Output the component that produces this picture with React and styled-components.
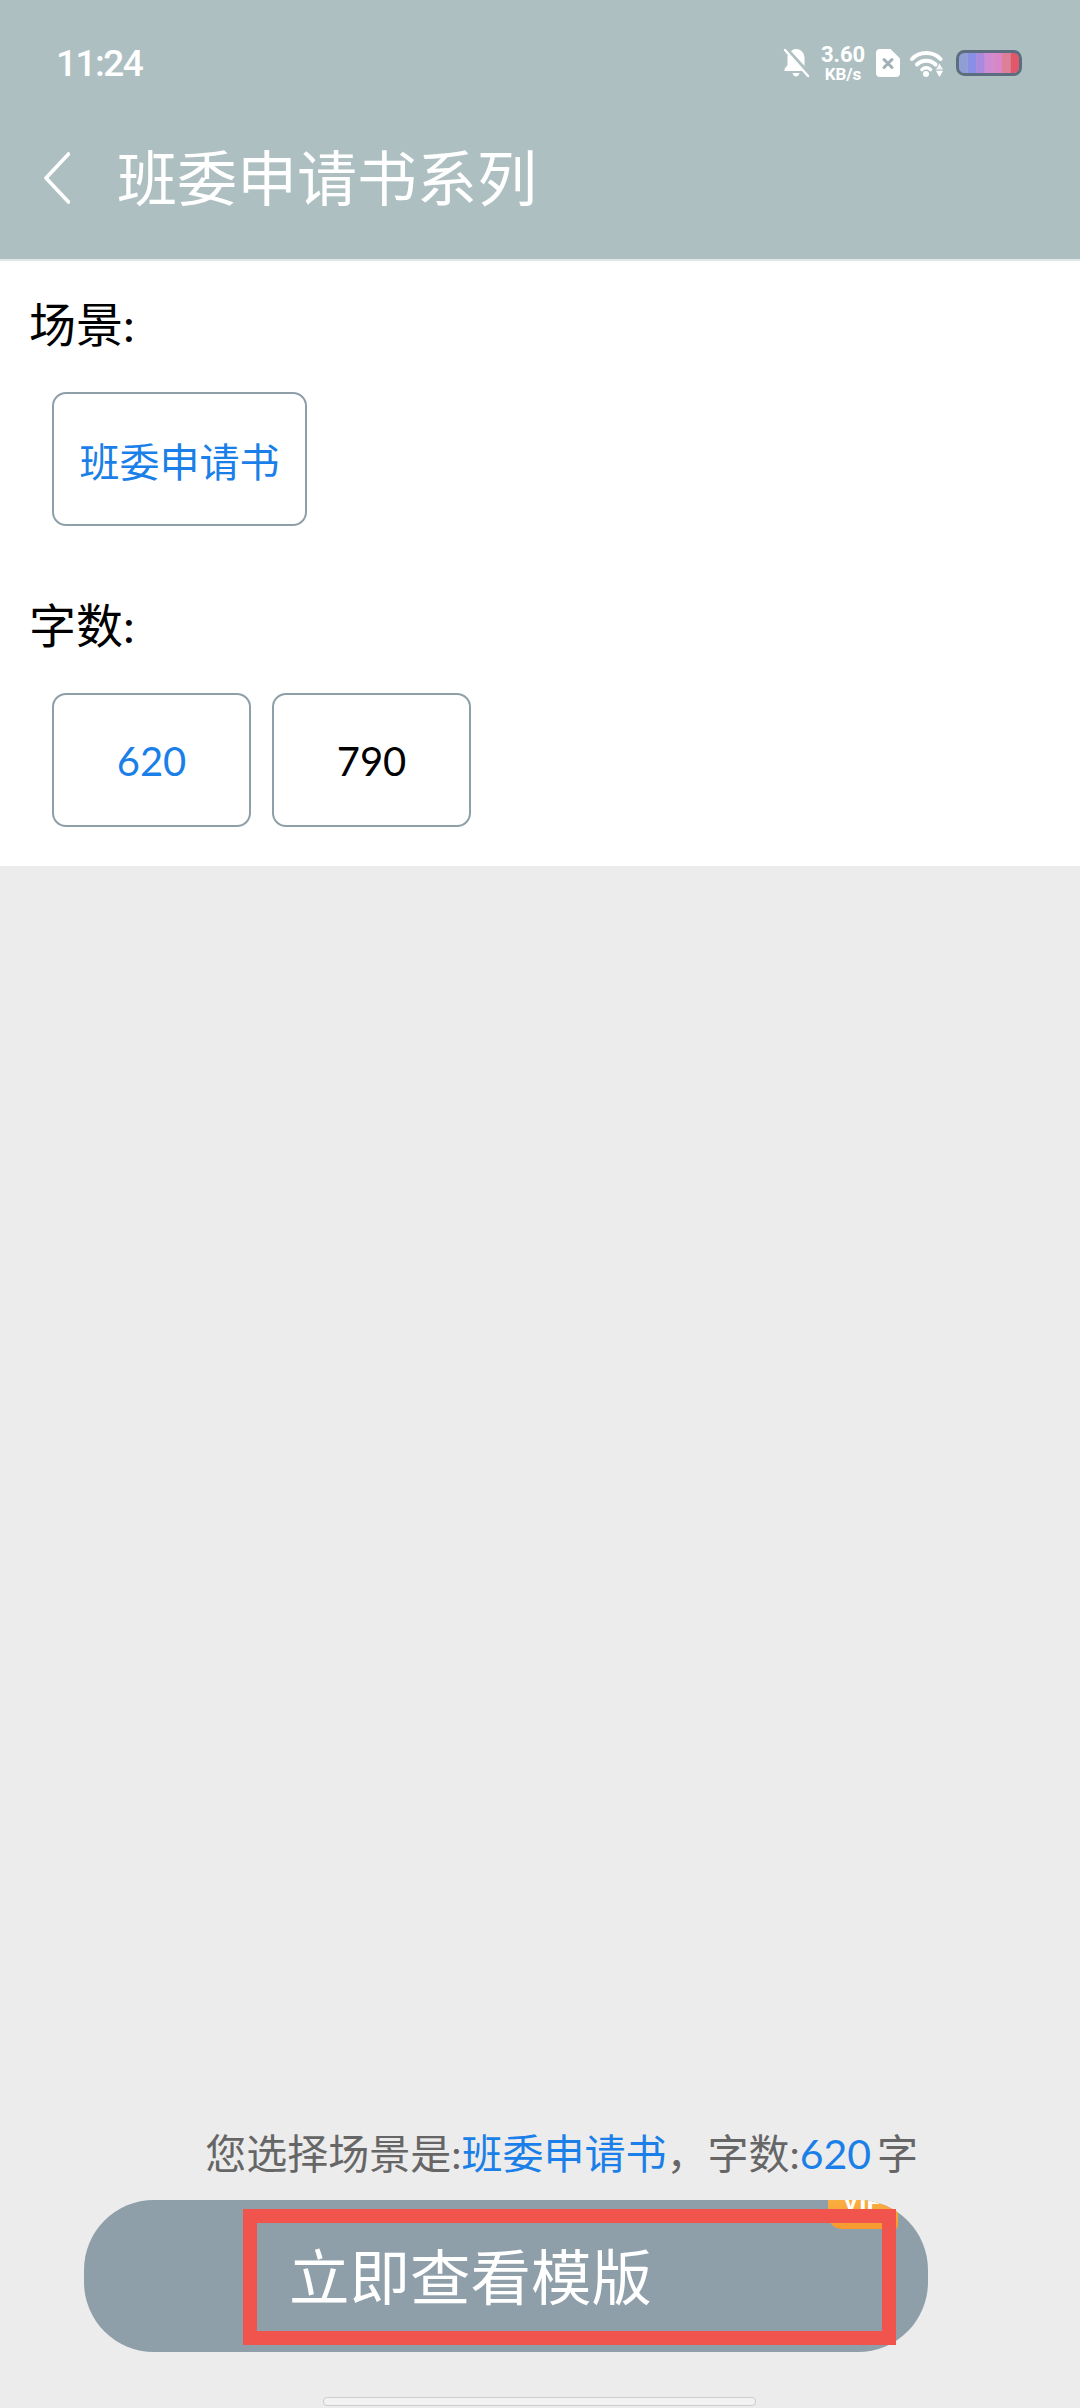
import React from "react";
import styled, { createGlobalStyle } from "styled-components";

const CJK = `Lato, "Noto Sans CJK SC", sans-serif`;

const Global = createGlobalStyle`
  html, body { margin: 0; padding: 0; background: #ececec; }
  * { box-sizing: border-box; }
`;

const Page = styled.div`
  width: 1080px;
  height: 2408px;
  display: flex;
  flex-direction: column;
  background: #ececec;
  font-family: ${CJK};
  overflow: hidden;
`;

const Header = styled.header`
  height: 261px;
  flex: none;
  background: #aebfc2;
  border-bottom: 2px solid #e0e7e9;
  display: flex;
  flex-direction: column;
  color: #fff;
`;

const StatusBar = styled.div`
  height: 126px;
  padding: 0 58px 0 56px;
  display: flex;
  align-items: center;
  justify-content: space-between;
`;

const Clock = styled.span`
  font-family: Roboto, sans-serif;
  font-size: 37px;
  font-weight: 500;
  letter-spacing: -1.5px;
`;

const StatusIcons = styled.div`
  display: flex;
  align-items: center;
`;

const IconSlot = styled.span`
  display: flex;
  margin-left: ${p => p.$left || 0}px;
`;

const Speed = styled.div`
  width: 46px;
  margin-left: 10px;
  display: flex;
  flex-direction: column;
  align-items: center;
  font-family: Roboto, sans-serif;
  font-weight: 700;
  line-height: 1;
`;

const SpeedValue = styled.span`
  font-size: 22px;
`;

const SpeedUnit = styled.span`
  font-size: 17px;
`;

const TitleRow = styled.div`
  display: flex;
  align-items: center;
  height: 108px;
  padding: 0 0 5px 44px;
`;

const Title = styled.h1`
  margin: 0 0 0 47px;
  font-size: 60px;
  font-weight: 400;
  line-height: 1;
`;

const Options = styled.section`
  flex: none;
  height: 605px;
  background: #fff;
  padding: 33px 30px 0 29px;
`;

const OptionLabel = styled.div`
  font-size: 47px;
  line-height: 60px;
  color: #000;
`;

const OptionRow = styled.div`
  display: flex;
  gap: 21px;
  margin: 38px 0 69px 23px;
`;

const Chip = styled.button`
  width: ${p => p.$width}px;
  height: 134px;
  padding: 2px 0 0;
  background: #fff;
  border: 2px solid #8e9fa9;
  border-radius: 14px;
  font-family: ${CJK};
  font-size: 40px;
  color: ${p => (p.$active ? "#1a7fe8" : "#000")};
`;

const Spacer = styled.div`
  flex: 1;
`;

const Summary = styled.p`
  margin: 0 162px 0 0;
  align-self: flex-end;
  font-size: 41px;
  line-height: 56px;
  color: #666;
  white-space: pre;
`;

const Accent = styled.span`
  color: #1a7fe8;
`;

const Unit = styled.span`
  margin-left: 6px;
`;

const ActionWrap = styled.div`
  position: relative;
  width: 844px;
  height: 152px;
  margin: 18px 0 0 84px;
  flex: none;
`;

const ActionButton = styled.button`
  position: relative;
  width: 100%;
  height: 100%;
  padding: 0;
  border: none;
  border-radius: 70px;
  background: #8e9fa9;
  overflow: hidden;
`;

const VipBadge = styled.span`
  position: absolute;
  top: -14px;
  right: 30px;
  width: 70px;
  height: 43px;
  background: linear-gradient(180deg, #fbb84a, #f79a2e);
  border-bottom-left-radius: 14px;
  border-bottom-right-radius: 4px;
  color: #fff;
  font-family: "Liberation Sans", sans-serif;
  font-weight: 700;
  font-size: 26px;
  line-height: 30px;
  text-align: center;
`;

const ActionFrame = styled.div`
  position: absolute;
  left: 159px;
  top: 9px;
  width: 653px;
  height: 136px;
  border: 14px solid #f0544c;
  display: flex;
  align-items: center;
  padding: 0 0 7px 32px;
  color: #fff;
  font-size: 60.500px;
`;

const HomeBar = styled.div`
  flex: none;
  width: 433px;
  height: 9px;
  margin: 45px 0 2px 323px;
  background: #f2f2f2;
  border: 1px solid #cdcdcd;
  border-radius: 4px;
`;

/* Muted bell with a diagonal strike */
const BellOff = () => (
  <svg width="28" height="30" viewBox="0 0 28 30">
    <path d="M6 5.500 21.500 23H2.500v-2l3-4v-7c0-1.700.2-3.200.5-4.500zM9 3.200C10.500 1.800 12.200 1 14 1c5 0 8.500 4 8.500 9v7.500L24 19.500 9 3.200zM10.500 25h7c-.4 2-1.800 3.500-3.500 3.500s-3.100-1.500-3.500-3.500z" fill="#fff" />
    <path d="M3 2l23 26" stroke="#fff" strokeWidth="2.400" strokeLinecap="round" />
  </svg>
);

/* SIM card with a cross: no service */
const SimOff = () => (
  <svg width="24" height="28" viewBox="0 0 24 28">
    <path d="M4 0h10.500L24 9.500V24a4 4 0 0 1-4 4H4a4 4 0 0 1-4-4V4a4 4 0 0 1 4-4z" fill="#fff" />
    <path d="M8 10.500l8 8M16 10.500l-8 8" stroke="#9fb1b5" strokeWidth="3" strokeLinecap="round" />
  </svg>
);

/* Wi-Fi arcs with the small up and down arrows at the lower right */
const Wifi = () => (
  <svg width="34" height="28" viewBox="0 0 34 28" fill="none">
    <path d="M2 10C9.500 2 23 2 30.500 10" stroke="#fff" strokeWidth="4" strokeLinecap="round" />
    <path d="M7 15.500C12 10.500 20.500 10.500 25.500 15.500" stroke="#fff" strokeWidth="4" strokeLinecap="round" />
    <path d="M12 20.500c2.500-2.200 6-2.200 8.500 0" stroke="#fff" strokeWidth="3.600" strokeLinecap="round" />
    <circle cx="16" cy="25" r="3" fill="#fff" />
    <path d="M26 21.800h7L29.500 28z" fill="#fff" />
    <path d="M29.500 14.500l3.500 6h-7z" fill="#fff" opacity=".85" />
  </svg>
);

const batteryCells = ["#8f9fd4", "#8a8fe6", "#a98ade", "#cf8ad2", "#d985c8", "#dd7f98", "#e2586a"];

/* Battery outline with its multi-coloured charge strip */
const Battery = () => (
  <svg width="66" height="26" viewBox="0 0 66 26">
    <defs>
      <clipPath id="charge">
        <rect x="3" y="3" width="60" height="20" rx="5" />
      </clipPath>
    </defs>
    <g clipPath="url(#charge)">
      {batteryCells.map((fill, i) => (
        <rect key={fill} x={3 + i * 8.600} y="3" width="8.600" height="20" fill={fill} />
      ))}
    </g>
    <rect x="1.500" y="1.500" width="63" height="23" rx="7" fill="none" stroke="#5d6d80" strokeWidth="3" />
  </svg>
);

const BackChevron = () => (
  <svg width="26" height="52" viewBox="0 0 26 52" fill="none">
    <path d="M24.500 2 2 26l22.500 24" stroke="#fff" strokeWidth="3.600" strokeLinecap="round" strokeLinejoin="round" />
  </svg>
);

export default function App() {
  return (
    <Page>
      <Global />
      <Header>
        <StatusBar>
          <Clock>11:24</Clock>
          <StatusIcons>
            <BellOff />
            <Speed>
              <SpeedValue>3.60</SpeedValue>
              <SpeedUnit>KB/s</SpeedUnit>
            </Speed>
            <IconSlot $left={10}><SimOff /></IconSlot>
            <IconSlot $left={10}><Wifi /></IconSlot>
            <IconSlot $left={12}><Battery /></IconSlot>
          </StatusIcons>
        </StatusBar>
        <TitleRow>
          <BackChevron />
          <Title>班委申请书系列</Title>
        </TitleRow>
      </Header>

      <Options>
        <OptionLabel>场景:</OptionLabel>
        <OptionRow>
          <Chip $width={255} $active>班委申请书</Chip>
        </OptionRow>
        <OptionLabel>字数:</OptionLabel>
        <OptionRow>
          <Chip $width={199} $active>620</Chip>
          <Chip $width={199}>790</Chip>
        </OptionRow>
      </Options>

      <Spacer />

      <Summary>
        您选择场景是:<Accent>班委申请书</Accent>，字数:<Accent>620</Accent><Unit>字</Unit>
      </Summary>

      <ActionWrap>
        <ActionButton>
          <VipBadge>VIP</VipBadge>
        </ActionButton>
        <ActionFrame>立即查看模版</ActionFrame>
      </ActionWrap>

      <HomeBar />
    </Page>
  );
}
